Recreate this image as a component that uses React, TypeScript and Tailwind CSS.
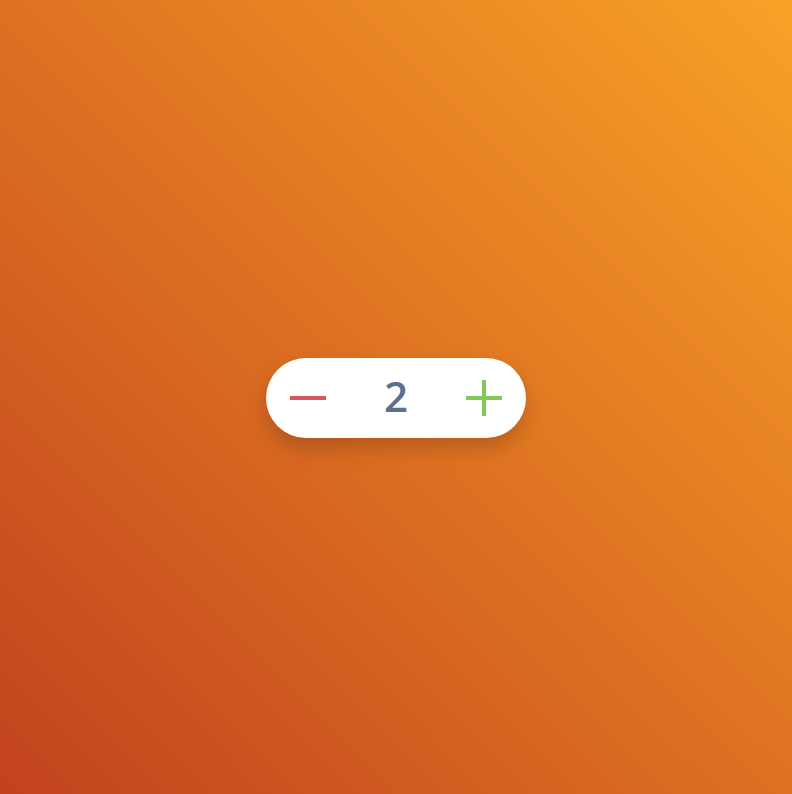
export default function App() {
  return (
    <div className="w-[792px] h-[794px] flex items-center justify-center bg-[linear-gradient(to_top_right,#c2421e,#f8a126)]">
      <div className="mt-0.5 w-[260px] h-[80px] rounded-full bg-white flex items-center justify-between px-6 shadow-[0_10px_20px_rgba(0,0,0,0.18)]">
        <button className="w-9 h-9 flex items-center justify-center">
          <span className="block w-9 h-1 bg-[#d9575b]" />
        </button>
        <span className="text-[42px] leading-none font-semibold text-[#58718f] font-['Open_Sans',sans-serif] -mt-1">2</span>
        <button className="relative w-9 h-9 flex items-center justify-center">
          <span className="absolute w-9 h-1 bg-[#82c957]" />
          <span className="absolute w-1 h-9 bg-[#82c957]" />
        </button>
      </div>
    </div>
  );
}
